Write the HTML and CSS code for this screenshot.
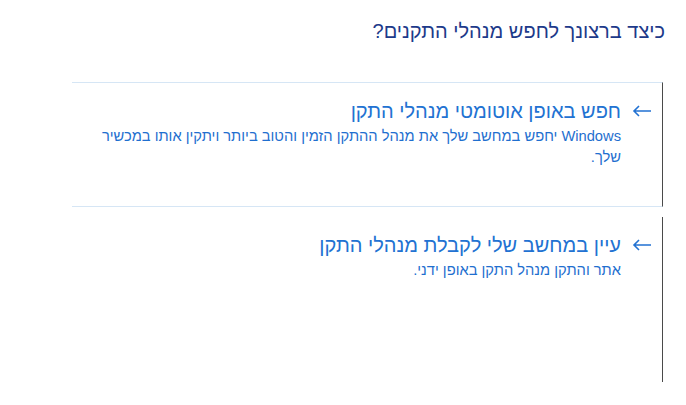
FILE: index.html
```html
<!DOCTYPE html>
<html lang="he" dir="rtl">
<head>
<meta charset="utf-8">
<link rel="stylesheet" href="styles.css">
</head>
<body>
<div class="page">
  <h1 class="title">כיצד ברצונך לחפש מנהלי התקנים?</h1>
  <div class="options">
    <div class="option option-hover">
      <div class="opt-head">
        <svg class="arrow" width="20" height="12" viewBox="0 0 20 12"><path d="M19 6H2M7 1L2 6l5 5" fill="none" stroke="currentColor" stroke-width="1.6"/></svg>
        <span class="opt-title">חפש באופן אוטומטי מנהלי התקן</span>
      </div>
      <p class="opt-desc">Windows יחפש במחשב שלך את מנהל ההתקן הזמין והטוב ביותר ויתקין אותו במכשיר שלך.</p>
    </div>
    <div class="option option-plain">
      <div class="opt-head">
        <svg class="arrow" width="20" height="12" viewBox="0 0 20 12"><path d="M19 6H2M7 1L2 6l5 5" fill="none" stroke="currentColor" stroke-width="1.6"/></svg>
        <span class="opt-title">עיין במחשב שלי לקבלת מנהלי התקן</span>
      </div>
      <p class="opt-desc">אתר והתקן מנהל התקן באופן ידני.</p>
    </div>
  </div>
</div>
</body>
</html>
```
FILE: styles.css
```css
html, body {
  margin: 0;
  padding: 0;
  background: #ffffff;
}
body {
  width: 686px;
  height: 405px;
  overflow: hidden;
  font-family: "Liberation Sans", "DejaVu Sans", sans-serif;
}
.page {
  padding: 18px 21px 0 72px;
}
.title {
  margin: 0;
  font-size: 20px;
  font-weight: normal;
  line-height: 26px;
  color: #1d3a8a;
}
.options {
  margin-top: 38px;
  margin-right: 2px;
  display: flex;
  flex-direction: column;
  gap: 10px;
}
.option {
  border-right: 1px solid #4a4a4a;
  padding: 16px 10px 0 20px;
  box-sizing: border-box;
}
.option-hover {
  height: 125px;
  border-top: 1px solid #d6e6f5;
  border-bottom: 1px solid #d6e6f5;
}
.option-plain {
  height: 165px;
  padding-top: 16px;
}
.opt-head {
  display: flex;
  align-items: center;
  gap: 11px;
  color: #2272d2;
}
.arrow {
  flex: none;
}
.opt-title {
  font-size: 20px;
  line-height: 24px;
}
.opt-desc {
  margin: 3px 31px 0 0;
  font-size: 14.7px;
  line-height: 21px;
  color: #1f6fcf;
}
```
